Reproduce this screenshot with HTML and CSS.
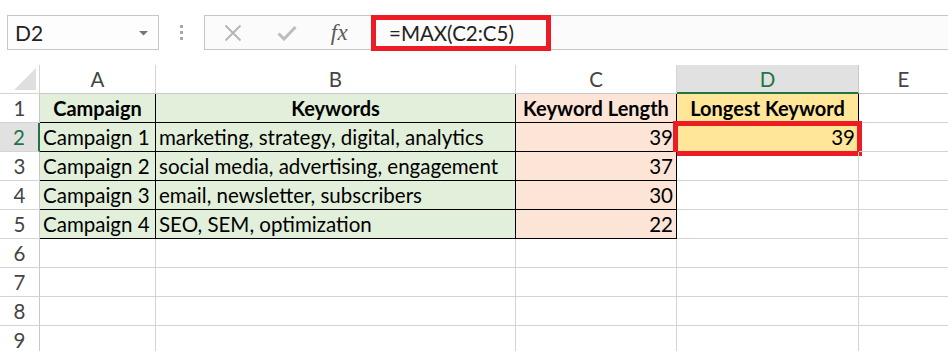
FILE: index.html
```html
<!DOCTYPE html>
<html>
<head>
<meta charset="utf-8">
<link rel="stylesheet" href="styles.css">
</head>
<body>
<div class="app">
  <div class="topbar">
    <div class="namebox">
      <span class="namebox-text">D2</span>
      <svg class="namebox-arrow" width="9" height="5" viewBox="0 0 9 5"><polygon points="0,0 9,0 4.5,4.5" fill="#777"/></svg>
    </div>
    <div class="dots">
      <span class="dot"></span><span class="dot"></span><span class="dot"></span>
    </div>
    <div class="fbar">
      <div class="fbtn">
        <svg width="18" height="18" viewBox="0 0 18 18"><path d="M1.5 1.5 L16.5 16.5 M16.5 1.5 L1.5 16.5" stroke="#b4b4b4" stroke-width="1.8" fill="none"/></svg>
      </div>
      <div class="fbtn">
        <svg width="20" height="16" viewBox="0 0 20 16"><path d="M1.5 8.5 L7 14 L18.5 2" stroke="#bdbdbd" stroke-width="3" fill="none" stroke-linejoin="miter"/></svg>
      </div>
      <div class="fbtn fx"><span>fx</span></div>
      <div class="finput">
        <span class="formula">=MAX(C2:C5)</span>
        <div class="hl hl-formula"></div>
      </div>
    </div>
  </div>

  <div class="sheet">
    <div class="corner"><svg width="22" height="22" viewBox="0 0 22 22"><polygon points="22,0 22,22 0,22" fill="#dfdfdf"/></svg></div>
    <div class="colhdr">A</div>
    <div class="colhdr">B</div>
    <div class="colhdr">C</div>
    <div class="colhdr active">D</div>
    <div class="colhdr">E</div>

    <div class="rowhdr">1</div>
    <div class="cell green b bold center">Campaign</div>
    <div class="cell green b bold center">Keywords</div>
    <div class="cell peach b bold center">Keyword Length</div>
    <div class="cell yellow b bold center">Longest Keyword</div>
    <div class="cell"></div>

    <div class="rowhdr active">2</div>
    <div class="cell green b">Campaign 1</div>
    <div class="cell green b">marketing, strategy, digital, analytics</div>
    <div class="cell peach b num">39</div>
    <div class="cell yellow num sel">39<div class="hl hl-cell"></div></div>
    <div class="cell"></div>

    <div class="rowhdr">3</div>
    <div class="cell green b">Campaign 2</div>
    <div class="cell green b">social media, advertising, engagement</div>
    <div class="cell peach b num">37</div>
    <div class="cell"></div>
    <div class="cell"></div>

    <div class="rowhdr">4</div>
    <div class="cell green b">Campaign 3</div>
    <div class="cell green b">email, newsletter, subscribers</div>
    <div class="cell peach b num">30</div>
    <div class="cell"></div>
    <div class="cell"></div>

    <div class="rowhdr">5</div>
    <div class="cell green b">Campaign 4</div>
    <div class="cell green b">SEO, SEM, optimization</div>
    <div class="cell peach b num">22</div>
    <div class="cell"></div>
    <div class="cell"></div>

    <div class="rowhdr">6</div>
    <div class="cell"></div><div class="cell"></div><div class="cell"></div><div class="cell"></div><div class="cell"></div>
    <div class="rowhdr">7</div>
    <div class="cell"></div><div class="cell"></div><div class="cell"></div><div class="cell"></div><div class="cell"></div>
    <div class="rowhdr">8</div>
    <div class="cell"></div><div class="cell"></div><div class="cell"></div><div class="cell"></div><div class="cell"></div>
    <div class="rowhdr">9</div>
    <div class="cell"></div><div class="cell"></div><div class="cell"></div><div class="cell"></div><div class="cell"></div>
  </div>
</div>
</body>
</html>
```

FILE: styles.css
```css
* { box-sizing: border-box; }
html, body { margin: 0; padding: 0; background: #fff; overflow: hidden; }
body { width: 948px; height: 351px; font-family: Lato, "Open Sans", sans-serif; }

.app { display: flex; flex-direction: column; }

.topbar {
  display: flex;
  padding: 15px 0 0 7px;
  height: 65px;
  align-items: flex-start;
}
.namebox {
  width: 152px;
  height: 35px;
  border: 1px solid #c6c6c6;
  background: #fdfdfd;
  display: flex;
  align-items: center;
  justify-content: space-between;
  padding: 0 10px 0 7px;
}
.namebox-text { font-size: 21px; color: #222; }
.namebox-arrow { margin-top: 1px; }

.dots {
  width: 45px;
  height: 35px;
  display: flex;
  flex-direction: column;
  align-items: center;
  justify-content: center;
  gap: 3px;
}
.dot { width: 3px; height: 3px; background: #a8a8a8; display: block; }

.fbar {
  flex: 1;
  height: 35px;
  border-top: 1px solid #c6c6c6;
  border-bottom: 1px solid #c6c6c6;
  border-left: 1px solid #c6c6c6;
  background: #fbfbfb;
  display: flex;
  align-items: center;
}
.fbtn {
  width: 53px;
  height: 100%;
  display: flex;
  align-items: center;
  justify-content: center;
}
.fbtn:first-child { width: 55px; }
.fx span {
  font-family: "Liberation Serif", serif;
  font-style: italic;
  font-size: 23px;
  color: #5a5a5a;
  letter-spacing: 0.5px;
}
.finput {
  position: relative;
  flex: 1;
  height: 100%;
  display: flex;
  align-items: center;
  padding-left: 23px;
}
.formula { font-size: 20.5px; color: #222; }

.hl { position: absolute; border: 5px solid #ed1c24; pointer-events: none; }
.hl-formula { left: 5px; top: -1px; width: 180px; height: 36px; }

.sheet {
  display: grid;
  grid-template-columns: 40px 116px 360px 161px 182px 90px;
  grid-auto-rows: 29px;
  font-size: 20.5px;
}
.corner {
  border-right: 1px solid #d4d4d4;
  border-bottom: 1px solid #d4d4d4;
  display: flex;
  align-items: flex-end;
  justify-content: flex-end;
  padding: 0 3px 3px 0;
}
.colhdr {
  border-right: 1px solid #d4d4d4;
  border-bottom: 1px solid #c8c8c8;
  color: #444;
  text-align: center;
  line-height: 28px;
}
.colhdr.active {
  background: #e1e1e1;
  color: #217346;
  border-bottom: 2px solid #217346;
  border-right-color: #c8c8c8;
}
.rowhdr {
  border-right: 1px solid #c8c8c8;
  border-bottom: 1px solid #d4d4d4;
  color: #444;
  text-align: center;
  line-height: 28px;
}
.rowhdr.active {
  background: #e1e1e1;
  color: #217346;
  border-right: 2px solid #217346;
}
.cell {
  border-right: 1px solid #d4d4d4;
  border-bottom: 1px solid #d4d4d4;
  color: #000;
  line-height: 28px;
  padding: 0 3px;
  white-space: nowrap;
  overflow: visible;
  position: relative;
}
.cell.b { border-right-color: #000; border-bottom-color: #000; }
.cell.green { background: #e2efda; }
.cell.peach { background: #fce4d6; }
.cell.yellow { background: #ffe699; }
.cell.sel { border-right-color: #d4d4d4; }
.bold { font-weight: 700; font-size: 20px; }
.center { text-align: center; }
.num { text-align: right; padding-right: 3px; }
.hl-cell { left: -4px; top: -2px; right: -4px; bottom: -5px; }
```
